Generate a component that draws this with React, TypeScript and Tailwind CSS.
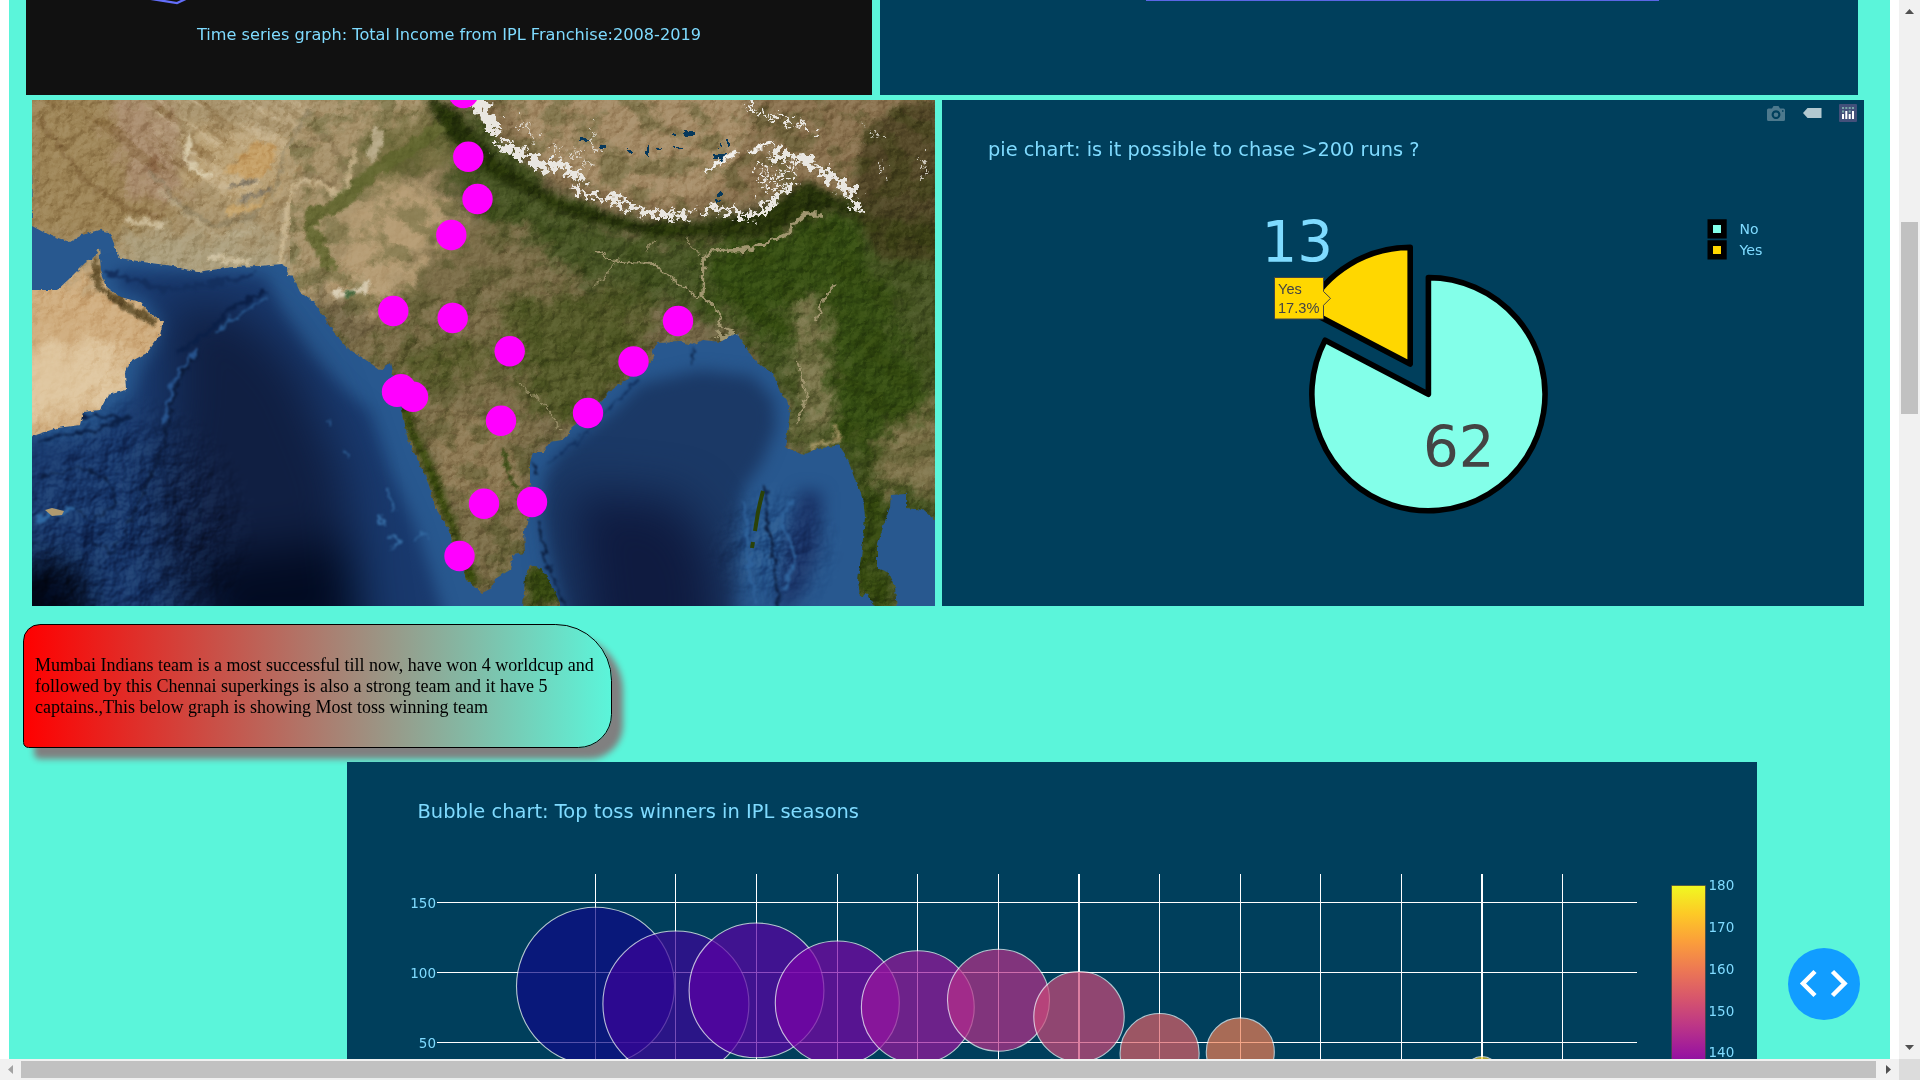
import React from "react";

const VERDANA = 'Verdana, "DejaVu Sans", sans-serif';
const SKY = "#7fdbff";

type LabelProps = {
  x: number;
  y: number;
  size: number;
  width?: number;
  fill?: string;
  anchor?: "start" | "middle" | "end";
  family?: string;
  children: React.ReactNode;
};

function Label({ x, y, size, width, fill = SKY, anchor = "start", family = VERDANA, children }: LabelProps) {
  return (
    <text
      x={x}
      y={y}
      fontSize={size}
      fill={fill}
      textAnchor={anchor}
      fontFamily={family}
      textLength={width}
      lengthAdjust="spacingAndGlyphs"
    >
      {children}
    </text>
  );
}

const cities: [number, number][] = [
  [463.5, 93], [468.3, 156.7], [477.5, 199], [451.3, 235], [393.3, 311], [452.7, 318], [678, 321],
  [509.7, 351.3], [633.5, 361.5], [588, 413], [501, 420.7], [397, 391.7], [401, 389.3], [413, 396.7],
  [484, 503.7], [532, 502], [459.5, 556],
];

const MAINLAND =
  "M32,226 45,233 58,238 70,242 82,235 100,230 109,232 115,247 120,258 143,262 173,266 197,272 233,267 260,266 282,264 287,267 288,276 293,277 300,292 313,302 322,313 328,324 330,327 347,348 363,358 380,370 390,363 393,375 397,390 402,410 408,440 420,465 428,482 435,507 450,532 453,547 467,580 482,593 492,588 495,579 510,570 513,555 525,553 524,530 532,510 530,483 530,463 533,452 543,452 550,442 562,440 570,433 572,427 590,413 603,400 613,388 630,378 643,370 655,357 652,350 658,343 680,342 693,345 703,340 720,342 737,333 742,342 753,358 762,367 773,373 780,392 787,400 790,413 785,447 803,455 817,449 840,445 848,460 855,480 863,497 865,517 862,550 858,580 860,597 867,593 877,610 897,610 895,587 888,572 877,568 877,547 883,527 890,507 891,495 906,494 906,508 923,510 937,522 937,98 30,98Z";
const ARABIA =
  "M30,290 57,290 68,280 85,263 95,257 99,247 101,270 107,287 120,297 140,302 150,313 163,322 160,335 147,353 143,355 130,362 125,373 126,390 108,395 100,410 83,412 80,425 57,428 30,437Z";
const LANKA = "M523,608 525,577 530,565 542,570 552,585 562,608Z";

function SatelliteMap() {
  return (
    <svg viewBox="32 100 903 506" className="block h-full w-full">
      <defs>
        <clipPath id="land">
          <path d={MAINLAND} />
          <path d={ARABIA} />
          <path d={LANKA} />
        </clipPath>
        <filter id="b4" x="-20%" y="-20%" width="140%" height="140%" colorInterpolationFilters="sRGB"><feGaussianBlur stdDeviation="3" /></filter>
        <filter id="b8" x="-30%" y="-30%" width="160%" height="160%" colorInterpolationFilters="sRGB"><feGaussianBlur stdDeviation="8" /></filter>
        <filter id="b24" x="-60%" y="-60%" width="220%" height="220%" colorInterpolationFilters="sRGB"><feGaussianBlur stdDeviation="24" /></filter>
        <filter id="soft" x="-10%" y="-10%" width="120%" height="120%" colorInterpolationFilters="sRGB">
          <feTurbulence type="fractalNoise" baseFrequency="0.12" numOctaves="3" seed="4" result="n" />
          <feDisplacementMap in="SourceGraphic" in2="n" scale="12" xChannelSelector="R" yChannelSelector="G" />
          <feGaussianBlur stdDeviation="1" />
        </filter>
        <filter id="river" x="-10%" y="-10%" width="120%" height="120%" colorInterpolationFilters="sRGB">
          <feTurbulence type="fractalNoise" baseFrequency="0.1" numOctaves="2" seed="4" result="n" />
          <feDisplacementMap in="SourceGraphic" in2="n" scale="10" xChannelSelector="R" yChannelSelector="G" />
          <feGaussianBlur stdDeviation="0.4" />
        </filter>
        <filter id="snow" x="-10%" y="-10%" width="120%" height="120%" colorInterpolationFilters="sRGB">
          <feTurbulence type="fractalNoise" baseFrequency="0.13" numOctaves="3" seed="9" result="n" />
          <feDisplacementMap in="SourceGraphic" in2="n" scale="28" xChannelSelector="R" yChannelSelector="G" />
          <feGaussianBlur stdDeviation="0.7" />
        </filter>
        <filter id="coast" filterUnits="userSpaceOnUse" x="32" y="100" width="903" height="506" colorInterpolationFilters="sRGB">
          <feTurbulence type="fractalNoise" baseFrequency="0.2" numOctaves="2" seed="8" result="n" />
          <feDisplacementMap in="SourceGraphic" in2="n" scale="4" xChannelSelector="R" yChannelSelector="G" />
        </filter>
        <filter id="patchy" filterUnits="userSpaceOnUse" x="-20" y="50" width="1000" height="600" colorInterpolationFilters="sRGB">
          <feGaussianBlur stdDeviation="9" result="s" />
          <feTurbulence type="fractalNoise" baseFrequency="0.05" numOctaves="5" seed="11" result="n" />
          <feDisplacementMap in="s" in2="n" scale="46" xChannelSelector="R" yChannelSelector="G" />
        </filter>
        <filter id="grainDark" x="0" y="0" width="100%" height="100%" colorInterpolationFilters="sRGB">
          <feTurbulence type="fractalNoise" baseFrequency="0.035 0.045" numOctaves="6" seed="3" />
          <feColorMatrix values="0 0 0 0 0.15  0 0 0 0 0.22  0 0 0 0 0.02  5 0 0 0 -2.3" />
        </filter>
        <filter id="grainLight" x="0" y="0" width="100%" height="100%" colorInterpolationFilters="sRGB">
          <feTurbulence type="fractalNoise" baseFrequency="0.015 0.07" numOctaves="5" seed="21" />
          <feColorMatrix values="0 0 0 0 0.86  0 0 0 0 0.79  0 0 0 0 0.66  0 5 0 0 -2.4" />
        </filter>
        <filter id="ridges" x="0" y="0" width="100%" height="100%" colorInterpolationFilters="sRGB">
          <feTurbulence type="fractalNoise" baseFrequency="0.015 0.08" numOctaves="5" seed="31" />
          <feColorMatrix values="0 0 0 0 0.45  0 0 0 0 0.32  0 0 0 0 0.14  0 5 0 0 -2.5" />
        </filter>
        <filter id="relief" filterUnits="userSpaceOnUse" x="32" y="100" width="903" height="506" colorInterpolationFilters="sRGB">
          <feTurbulence type="fractalNoise" baseFrequency="0.07" numOctaves="6" seed="14" result="n" />
          <feColorMatrix in="n" values="0 0 0 0 0  0 0 0 0 0  0 0 0 0 0  1 0 0 0 0" result="h" />
          <feDiffuseLighting in="h" surfaceScale="5" diffuseConstant="0.74" lightingColor="#ffffff">
            <feDistantLight azimuth="225" elevation="45" />
          </feDiffuseLighting>
        </filter>
        <filter id="seaRelief" filterUnits="userSpaceOnUse" x="32" y="100" width="903" height="506" colorInterpolationFilters="sRGB">
          <feTurbulence type="fractalNoise" baseFrequency="0.035" numOctaves="4" seed="17" result="n" />
          <feColorMatrix in="n" values="0 0 0 0 0  0 0 0 0 0  0 0 0 0 0  1 0 0 0 0" result="h" />
          <feDiffuseLighting in="h" surfaceScale="8" diffuseConstant="0.7" lightingColor="#ffffff">
            <feDistantLight azimuth="225" elevation="45" />
          </feDiffuseLighting>
        </filter>
        <radialGradient id="fadeSW" gradientUnits="userSpaceOnUse" cx="120" cy="530" r="140">
          <stop offset="0" stopColor="#ffffff" />
          <stop offset="0.6" stopColor="#ffffff" stopOpacity="0.8" />
          <stop offset="1" stopColor="#ffffff" stopOpacity="0" />
        </radialGradient>
        <radialGradient id="fadeAnd" gradientUnits="userSpaceOnUse" cx="775" cy="550" r="70">
          <stop offset="0" stopColor="#ffffff" />
          <stop offset="1" stopColor="#ffffff" stopOpacity="0" />
        </radialGradient>
        <mask id="seaMask" maskUnits="userSpaceOnUse" x="32" y="100" width="903" height="506">
          <rect x="32" y="100" width="903" height="506" fill="url(#fadeSW)" />
          <rect x="690" y="460" width="170" height="146" fill="url(#fadeAnd)" />
        </mask>
        <radialGradient id="calm" gradientUnits="userSpaceOnUse" cx="400" cy="210" r="110">
          <stop offset="0" stopColor="#000000" stopOpacity="0.8" />
          <stop offset="0.6" stopColor="#000000" stopOpacity="0.55" />
          <stop offset="1" stopColor="#000000" stopOpacity="0" />
        </radialGradient>
        <radialGradient id="calmArabia" gradientUnits="userSpaceOnUse" cx="50" cy="370" r="80">
          <stop offset="0" stopColor="#000000" stopOpacity="0.8" />
          <stop offset="1" stopColor="#000000" stopOpacity="0" />
        </radialGradient>
        <mask id="reliefMask" maskUnits="userSpaceOnUse" x="32" y="100" width="903" height="506">
          <rect x="32" y="100" width="903" height="506" fill="#ffffff" />
          <rect x="32" y="100" width="903" height="506" fill="url(#calm)" />
          <rect x="32" y="100" width="903" height="506" fill="url(#calmArabia)" />
        </mask>
      </defs>

      {/* sea: shelf, basins, ridges */}
      <rect x="32" y="100" width="903" height="506" fill="#28588f" />
      <g filter="url(#b8)">
        <path d="M112,270 265,275 283,312 312,355 340,385 370,412 390,470 415,525 430,570 448,630 10,630 10,445 90,432 112,414 134,396 142,368 158,347 166,324 145,298 122,290Z" fill="#19396d" />
        <path d="M560,452 612,412 640,384 700,370 752,376 774,400 776,428 762,462 744,488 736,540 732,630 570,630 548,550 542,510 545,475Z" fill="#1b3966" />
        <path d="M800,490 822,492 820,550 805,590 790,610 778,610 785,540Z" fill="#1a3468" />
      </g>
      <g filter="url(#b24)">
        <path d="M170,300 250,315 300,370 325,430 345,480 360,640 190,640 160,560 160,480 175,400Z" fill="#101f42" />
        <path d="M190,560 350,540 365,650 220,650Z" fill="#020b22" />
        <path d="M570,490 680,500 715,560 720,660 590,660Z" fill="#0f1b40" />
        <path d="M0,570 75,565 82,650 0,650Z" fill="#000412" />
      </g>
      <path d="M20,575 50,560 80,575 82,620 20,620Z" fill="#000412" opacity="0.6" filter="url(#b8)" />
      <g mask="url(#seaMask)" opacity="0.75" className="mix-blend-soft-light">
        <rect x="32" y="100" width="903" height="506" filter="url(#seaRelief)" />
      </g>
      <g filter="url(#soft)" fill="none">
        <path d="M265,292 232,308 212,328 190,345 178,352" stroke="#0b2048" strokeWidth="4" />
        <path d="M268,297 238,315 215,333" stroke="#28588f" strokeWidth="2.500" />
        <path d="M105,272 135,280 165,290 210,284 255,275" stroke="#14305f" strokeWidth="4" />
        <path d="M198,350 176,385 168,425 160,455 143,492 128,528" stroke="#0b1a38" strokeWidth="2" />
        <path d="M195,350 172,385 164,425" stroke="#28558f" strokeWidth="3" />
        <path d="M40,477 80,468 108,480 116,505 92,520 70,505M85,540 112,552 128,530" stroke="#0b1d40" strokeWidth="2" />
        <path d="M75,416 130,418 95,430 36,442" stroke="#0b2046" strokeWidth="3" />
        <path d="M36,520 60,512 75,510" stroke="#2f68a2" strokeWidth="6" />
        <path d="M386,488 395,510M380,515 382,525M386,535 400,540 392,550M415,540 425,533M328,420 329,428M345,450 348,458" stroke="#346aa2" strokeWidth="2.500" />
        <path d="M765,485 767,520 774,560 780,606" stroke="#0c1d3e" strokeWidth="2.500" />
        <path d="M744,500 748,560 756,606M792,500 780,520 796,555 784,590" stroke="#2f639c" strokeWidth="3" />
        <path d="M693,348 692,365" stroke="#10294f" strokeWidth="2" />
        <path d="M548,462 585,435 610,408 640,378" stroke="#12305e" strokeWidth="2" />
        <path d="M537,475 533,460M538,520 546,560 566,606" stroke="#0b1c3c" strokeWidth="2" />
      </g>
      <path d="M763,491 760,503 758,512 755,531M753,542 752,548" fill="none" stroke="#2b4208" strokeWidth="4" />

      {/* land */}
      <g filter="url(#coast)">
        <g clipPath="url(#land)">
          <rect x="30" y="98" width="907" height="510" fill="#766848" />
          <g filter="url(#patchy)">
            <path d="M-20,40H480L420,130 400,190 340,240 300,320H-20Z" fill="#a8936c" />
            <path d="M-20,90H130L180,220 120,240 -20,240Z" fill="#9d8456" />
            <path d="M110,90 165,100 185,200 140,205 115,150Z" fill="#a98c6d" />
            <path d="M185,130 285,130 290,180 260,205 190,190Z" fill="#baa175" />
            <path d="M120,235 285,235 285,285 120,285Z" fill="#ab9e7c" />
            <path d="M-20,250 -20,460 170,440 190,330 110,280Z" fill="#cfac7d" />
            <path d="M-20,360 110,340 140,400 -20,430Z" fill="#dfc69f" />
            <path d="M345,225 385,180 440,185 465,230 435,290 380,320 325,290Z" fill="#b69d75" />
            <path d="M372,130 420,110 470,140 470,185 420,170 370,190Z" fill="#7b7345" />
            <path d="M470,90 500,130 560,200 650,235 760,240 860,200 990,240 990,600 860,600 790,440 740,330 640,300 520,250 450,180Z" fill="#475424" />
            <path d="M720,240 850,200 900,330 950,420 940,500 860,460 780,350 700,290Z" fill="#344c12" />
            <path d="M460,225 520,230 580,280 620,320 540,420 520,580 480,600 440,500 400,420 340,360 380,310Z" fill="#7c6e49" />
            <path d="M500,300 650,290 640,360 570,440 520,380Z" fill="#555a29" />
            <path d="M395,360 470,340 490,370 410,385Z" fill="#565a28" />
            <path d="M430,420 500,420 520,500 490,510 450,500Z" fill="#8f7b55" />
            <path d="M790,310 820,290 835,430 805,450 795,360Z" fill="#817a50" />
            <path d="M870,440 950,400 950,500 880,490Z" fill="#7f744b" />
            <path d="M515,560 570,560 570,610 515,610Z" fill="#34460f" />
            <path d="M850,480 890,490 885,570 900,620 850,620Z" fill="#33470f" />
          </g>
          <g filter="url(#b4)">
            <path d="M398,395 406,430 422,462 436,500 452,535 458,560 470,590 478,580 462,545 450,510 432,462 414,430 410,400Z" fill="#304406" />
            <path d="M462,90 500,140 560,185 610,208 680,218 740,206 800,190 860,200 920,190 950,90Z" fill="#8b7350" />
            <path d="M500,90H740L750,130 720,190 670,205 600,190 530,150Z" fill="#a58c67" />
            <path d="M425,92 455,110 500,160 560,200 640,222 700,222 770,208 808,180 850,205 870,222 830,210 760,237 660,238 580,220 500,182 440,130Z" fill="#26320b" />
            <path d="M865,130 900,105 940,100 940,260 880,260 850,200Z" fill="#3f3718" opacity="0.7" />
          </g>
          <rect x="290" y="98" width="647" height="510" filter="url(#grainDark)" opacity="0.27" />
          <g transform="rotate(35 140 160)" opacity="0.45">
            <rect x="0" y="-30" width="250" height="170" filter="url(#grainLight)" />
            <rect x="0" y="-30" width="200" height="200" filter="url(#ridges)" opacity="0.8" />
          </g>
          <g filter="url(#soft)" fill="none">
            <path d="M222,170 235,160 258,142 276,148 272,172 250,180Z" fill="#c59f65" />
            <path d="M190,135 186,160 200,174 212,175" stroke="#ddd1b3" strokeWidth="6" opacity="0.85" />
            <path d="M228,210 255,208 270,198" stroke="#c5a36a" strokeWidth="6" />
            <path d="M230,185 260,180M240,200 270,190" stroke="#8b806c" strokeWidth="4" />
            <path d="M157,155 152,172" stroke="#85603f" strokeWidth="8" opacity="0.65" />
            <path d="M150,170 180,205 215,227 255,215 275,190 285,150 310,110" stroke="#857b60" strokeWidth="4" opacity="0.5" />
            <path d="M160,190 190,218 220,238 260,228" stroke="#c4b798" strokeWidth="4" opacity="0.5" />
            <path d="M40,120 85,180 130,210 165,218" stroke="#70532b" strokeWidth="6" opacity="0.45" />
            <path d="M125,220 165,226M205,258 250,262" stroke="#d8caaa" strokeWidth="7" opacity="0.7" />
            <path d="M292,150 325,135 345,165 335,185 300,172" stroke="#806c49" strokeWidth="4" opacity="0.6" />
            <path d="M280,270 285,230 290,190 305,180 345,195 355,150" stroke="#d3bf99" strokeWidth="5" opacity="0.7" />
            <path d="M440,125 410,150 375,170 355,190 335,208 312,212 310,230 322,250 330,268" stroke="#5f652d" strokeWidth="14" opacity="0.85" />
            <path d="M378,130 376,145 370,158" stroke="#b8ab89" strokeWidth="12" />
            <path d="M332,294 350,292 366,290 368,280" stroke="#e0d6be" strokeWidth="6" opacity="0.85" />
            <path d="M346,294 354,294" stroke="#3c6035" strokeWidth="7" />
            <path d="M96,258 98,285 125,306 155,322" stroke="#6a5630" strokeWidth="8" />
            <path d="M835,425 838,440 812,447" stroke="#9b8e5d" strokeWidth="5" />
            <path d="M505,447 508,475 516,488" stroke="#3c4c16" strokeWidth="4" />
          </g>
          <g mask="url(#reliefMask)" opacity="0.42" className="mix-blend-soft-light">
            <rect x="32" y="100" width="903" height="506" filter="url(#relief)" />
          </g>
          {/* rivers */}
          <g filter="url(#river)" fill="none" stroke="#a0966f">
            <path d="M594,250 610,260 625,263 655,264 668,275 690,292 703,296 715,308 722,325 738,335" strokeWidth="2.200" />
            <path d="M703,296 704,260 712,251 750,249 788,234 797,220 808,214 822,214" strokeWidth="3.400" />
            <path d="M735,335 722,338 716,332" strokeWidth="5" />
            <path d="M520,385 545,405 560,430M613,260 608,272 595,285M685,237 700,257M645,252 655,240" strokeWidth="1.400" opacity="0.8" />
            <path d="M797,360 808,395 797,425M835,287 822,300 817,320" strokeWidth="1.800" />
          </g>
          {/* lakes and snow */}
          <g filter="url(#river)">
            <path d="M714,153h14v6h-14zM684,131h12v6h-12zM580,138h6v3h-6zM600,146h6v3h-6zM625,150h9v4h-9zM646,144h3v12h-3zM549,155h6v3h-6zM655,148h6v2h-6zM670,134h5v2h-5zM675,146h6v2h-6zM717,192h7v3h-7zM715,200h6v2h-6zM727,140h2v5h-2zM718,144h2v5h-2z" fill="#06385b" />
          </g>
          <g filter="url(#snow)" fill="none" stroke="#e9e6e0">
            <path d="M474,98 484,112 496,132" strokeWidth="13" />
            <path d="M498,145 525,155 545,168 558,164 580,178" strokeWidth="9" />
            <path d="M575,186 592,197 612,199 630,206 652,214 672,217 688,214M704,212 720,208 735,214 750,218 764,208 780,195 796,182" strokeWidth="6" />
            <path d="M746,105 765,115 790,120 815,136" strokeWidth="3" strokeDasharray="14 4" />
            <path d="M770,155 800,158 818,168 835,180 850,192 858,210" strokeWidth="9" strokeDasharray="22 3" />
            <path d="M755,168 780,175 800,165M765,190 795,182M760,178 785,184" strokeWidth="3" strokeDasharray="8 4" />
            <path d="M880,160 884,174M923,155 924,180M865,130 880,138M518,118 535,138M550,145 562,152M575,150 588,165M592,120 594,150" strokeWidth="1.800" opacity="0.8" />
          </g>
          <path d="M706,172 717,163 737,152M748,153 758,148 773,143" fill="none" stroke="#f0eeea" strokeWidth="3.500" filter="url(#river)" />
        </g>
      </g>
      <path d="M45,510 52,508 64,511 62,515 52,516Z" fill="#b09a6f" />
      {cities.map(([x, y]) => (
        <circle key={`${x}-${y}`} cx={x} cy={y} r="15.2" fill="#ff00ff" />
      ))}
    </svg>
  );
}

function PieChart() {
  return (
    <svg viewBox="942 100 922 506" className="block h-full w-full">
      <Label x={988} y={156} size={19.1} width={431.5}>pie chart: is it possible to chase &gt;200 runs ?</Label>

      {/* toolbar */}
      <g fill="#4d798d">
        <path fillRule="evenodd" d="M1768.5,108.5h3.5l1.5,-2.5h5l1.5,2.5h3.5q1.5,0 1.5,1.5v9.5q0,1.5 -1.5,1.5h-15q-1.500,0 -1.500,-1.500v-9.500q0,-1.500 1.500,-1.500zM1776,110.200a4.400,4.400 0 1 0 0.010,0zM1782,110.200h1.500v1.500h-1.500z" />
        <circle cx="1776" cy="114.700" r="2.300" />
      </g>
      <path d="M1803,113 1807.500,108H1821.500V118H1807.500Z" fill="#b3c9d0" />
      <rect x="1839" y="104" width="18" height="18" rx="1" fill="#43507a" />
      <g fill="#ffffff">
        <path d="M1842,114h2v5h-2zM1845.300,111h2v8h-2zM1848.700,114h2v5h-2zM1852,111h2v8h-2z" />
      </g>
      <g fill="#78a8a8">
        <path d="M1842,107h2v2h-2zM1845.300,107h2v2h-2zM1848.700,107h2v2h-2zM1852,107h2v2h-2zM1842,110.500h2v2h-2zM1848.700,110.500h2v2h-2z" />
      </g>

      {/* slices */}
      <g stroke="#000000" strokeWidth="5.600" strokeLinejoin="round">
        <path d="M1428.400,394.200V277.600A116.600,116.600 0 1 1 1325.100,340.200Z" fill="#83ffe9" />
        <path d="M1410.200,364V247.400A116.600,116.600 0 0 0 1306.900,310Z" fill="#ffd700" />
      </g>
      <Label x={1297.3} y={262} size={56.250} anchor="middle">13</Label>
      <Label x={1458.700} y={466.500} size={56.250} anchor="middle" fill="#444444">62</Label>

      {/* hover label */}
      <path d="M1274.500,277.500H1323.500V291.500L1330.500,298.300 1323.500,305.300V319H1274.500Z" fill="#ffd700" stroke="#444444" />
      <Label x={1278} y={294} size={14.600} fill="#444444" family='"Liberation Sans", Arial, sans-serif'>Yes</Label>
      <Label x={1278} y={313.300} size={14.600} fill="#444444" family='"Liberation Sans", Arial, sans-serif'>17.3%</Label>

      {/* legend */}
      <path d="M1707.500,219.300h19.200v19.200h-19.200zM1707.500,240.300h19.200v19.200h-19.200z" fill="#000000" />
      <rect x="1713" y="225" width="8" height="8" fill="#83ffe9" />
      <rect x="1713" y="246" width="8" height="8" fill="#ffd700" />
      <Label x={1739.5} y={234} size={13.500} width={19}>No</Label>
      <Label x={1739.500} y={255} size={13.500} width={23}>Yes</Label>
    </svg>
  );
}

const columns = [595.5, 675.5, 756.5, 837.5, 917.5, 998.5, 1079, 1159.5, 1240.5, 1320.5, 1401.5, 1482, 1562.5];
const rows = [
  { y: 902.5, label: "150" },
  { y: 972.5, label: "100" },
  { y: 1042.5, label: "50" },
];
const bubbles = [
  { x: 595.5, y: 986.3, r: 79, c: "#0d0887" },
  { x: 675.9, y: 1004, r: 73, c: "#3c049a" },
  { x: 756.5, y: 990.4, r: 67.4, c: "#5c01a6" },
  { x: 837.3, y: 1003, r: 62, c: "#7d03a8" },
  { x: 917.8, y: 1007.2, r: 56.4, c: "#9c179e" },
  { x: 998.5, y: 1000.2, r: 51, c: "#b8308a" },
  { x: 1079, y: 1016.7, r: 45.2, c: "#cd4a7a" },
  { x: 1159.6, y: 1053, r: 39.5, c: "#de6068" },
  { x: 1240.3, y: 1051.9, r: 34, c: "#f07e54" },
  { x: 1482, y: 1073.5, r: 17, c: "#f7d225" },
];
const scaleTicks = [
  { y: 890.3, label: "180" },
  { y: 932.2, label: "170" },
  { y: 974.2, label: "160" },
  { y: 1015.5, label: "150" },
  { y: 1057.3, label: "140" },
];

function BubbleChart() {
  return (
    <svg viewBox="347 762 1410 297" className="block h-full w-full">
      <defs>
        <linearGradient id="plasma" gradientUnits="userSpaceOnUse" x1="0" y1="885.500" x2="0" y2="1136.500">
          <stop offset="0" stopColor="#f0f921" />
          <stop offset="0.111" stopColor="#fdca26" />
          <stop offset="0.222" stopColor="#fb9f3a" />
          <stop offset="0.333" stopColor="#ed7953" />
          <stop offset="0.444" stopColor="#d8576b" />
          <stop offset="0.556" stopColor="#bd3786" />
          <stop offset="0.667" stopColor="#9c179e" />
          <stop offset="0.778" stopColor="#7201a8" />
          <stop offset="1" stopColor="#0d0887" />
        </linearGradient>
      </defs>
      <Label x={417.5} y={818} size={19.100} width={441.5}>Bubble chart: Top toss winners in IPL seasons</Label>
      <g stroke="#ffffff">
        {columns.map((x) => (
          <line key={x} x1={x} x2={x} y1="874" y2="1059" strokeWidth={x % 1 === 0 ? 2 : 1} />
        ))}
        {rows.map((r) => (
          <line key={r.y} x1="437" x2="1637" y1={r.y} y2={r.y} />
        ))}
      </g>
      {rows.map((r) => (
        <Label key={r.label} x={436} y={r.y + 5.2} size={13.5} anchor="end">{r.label}</Label>
      ))}
      {bubbles.map((b) => (
        <circle key={b.x} cx={b.x} cy={b.y} r={b.r} fill={b.c} stroke="#ffffff" strokeWidth="1.125" opacity="0.7" />
      ))}
      <rect x="1671.500" y="885.500" width="34" height="251" fill="url(#plasma)" stroke="#444444" strokeOpacity="0.7" />
      {scaleTicks.map((t) => (
        <Label key={t.label} x={1708.5} y={t.y} size={13.5}>{t.label}</Label>
      ))}
    </svg>
  );
}

function VerticalScrollbar() {
  return (
    <div className="flex w-[21px] shrink-0 flex-col items-center bg-[#f1f1f1]">
      <div className="flex h-[222px] pt-[9px]">
        <svg className="h-[5px] w-[9px]" viewBox="0 0 9 5"><path d="M0 5 4.500 0 9 5Z" fill="#505050" /></svg>
      </div>
      <div className="h-48 w-[17px] bg-[#c1c1c1]" />
      <div className="flex flex-1 items-end pb-[9px]">
        <svg className="h-[5px] w-[9px]" viewBox="0 0 9 5"><path d="M0 0H9L4.500 5Z" fill="#505050" /></svg>
      </div>
    </div>
  );
}

function HorizontalScrollbar() {
  return (
    <div className="flex h-[21px] shrink-0 items-center bg-[#f1f1f1]">
      <div className="flex w-[21px] justify-center">
        <svg className="h-[9px] w-[5px]" viewBox="0 0 5 9"><path d="M5 0V9L0 4.500Z" fill="#a3a3a3" /></svg>
      </div>
      <div className="h-[17px] w-[1855px] bg-[#c1c1c1]" />
      <div className="flex flex-1 justify-center pl-[2px]">
        <svg className="h-[9px] w-[5px]" viewBox="0 0 5 9"><path d="M0 0V9L5 4.500Z" fill="#505050" /></svg>
      </div>
      <div className="h-[21px] w-[21px] bg-[#dcdcdc]" />
    </div>
  );
}

export default function App() {
  return (
    <div className="relative flex h-[1080px] w-[1920px] flex-col overflow-hidden bg-white">
      <div className="flex h-[1059px] shrink-0">
        <main className="mx-[9px] h-[1059px] w-[1881px] shrink-0 overflow-hidden bg-[#5bf5da]">
          <section className="ml-[17px] flex h-[95px] gap-2">
            <div className="h-[95px] w-[846px] bg-[#111111]">
              <svg viewBox="26 0 846 95" className="block h-full w-full">
                <path d="M148,-1.500 177,3 189,-2.500" fill="none" stroke="#636efa" strokeWidth="2.250" />
                <Label x={197} y={40} size={16} width={504}>Time series graph: Total Income from IPL Franchise:2008-2019</Label>
              </svg>
            </div>
            <div className="h-[95px] w-[978px] bg-[#003f5c]">
              <div className="ml-[266px] h-px w-[513px] bg-[#5a66e6]" />
            </div>
          </section>

          <section className="mt-[5px] ml-[23px] flex h-[506px] gap-[7px]">
            <div className="h-[506px] w-[903px] overflow-hidden"><SatelliteMap /></div>
            <div className="h-[506px] w-[922px] bg-[#003f5c]"><PieChart /></div>
          </section>

          <section className="mt-[18px] ml-[14px] h-[124px] w-[589px] rounded-[16.9px_56.25px_33.75px_5.6px] border border-black bg-linear-to-r/srgb from-[#ff0000] to-[#5bf5da] px-[11px] pt-[30px] font-['Liberation_Serif',serif] text-[18px] leading-[21px] whitespace-nowrap text-black shadow-[11px_11px_6px_#808080]">
            <p>
              Mumbai Indians team is a most successful till now, have won 4 worldcup and<br />
              followed by this Chennai superkings is also a strong team and it have 5<br />
              captains.,This below graph is showing Most toss winning team
            </p>
          </section>

          <section className="relative mt-[14px] ml-[338px] h-[297px] w-[1410px] bg-[#003f5c]">
            <BubbleChart />
          </section>
        </main>
        <VerticalScrollbar />
      </div>
      <HorizontalScrollbar />

      <button aria-label="Developer tools" className="absolute top-[948px] left-[1788px] h-[72px] w-[72px] rounded-full bg-[#119dff]">
        <svg viewBox="0 0 72 72" className="h-full w-full" fill="none" stroke="#ffffff" strokeWidth="4.500">
          <path d="M27,23.500 15,35.500 27,47.500M44.500,23.500 56.500,35.500 44.500,47.500" />
        </svg>
      </button>
    </div>
  );
}
